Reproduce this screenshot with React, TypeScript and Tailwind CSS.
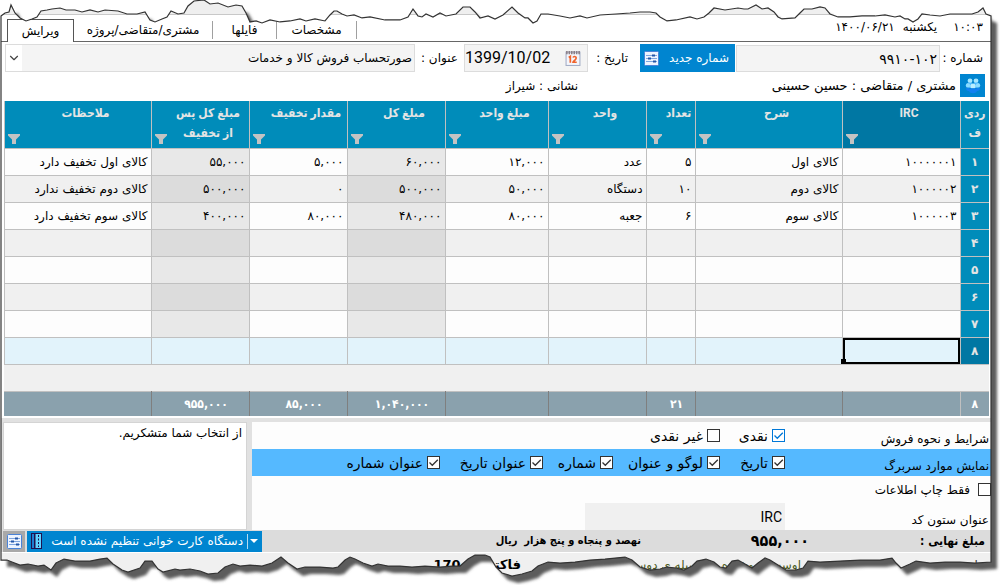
import { useState } from 'react'
import type { ReactNode } from 'react'
import { ChevronDown } from 'lucide-react'
import clsx from 'clsx'

const TABS = [
  { id: 'specs', label: 'مشخصات', width: 'w-20' },
  { id: 'files', label: 'فایلها', width: 'w-16' },
  { id: 'customer', label: 'مشتری/متقاضی/پروژه', width: 'w-[139px]' },
  { id: 'edit', label: 'ویرایش', width: 'w-[67px]' },
]

const COLUMNS = [
  { key: 'irc', label: 'IRC', width: 118, total: '' },
  { key: 'desc', label: 'شرح', width: 147, total: '' },
  { key: 'count', label: 'تعداد', width: 49, total: '۲۱' },
  { key: 'unit', label: 'واحد', width: 98, total: '' },
  { key: 'unitPrice', label: 'مبلغ واحد', width: 103, total: '' },
  { key: 'sum', label: 'مبلغ کل', width: 98, total: '۱,۰۴۰,۰۰۰' },
  { key: 'discount', label: 'مقدار تخفیف', width: 98, total: '۸۵,۰۰۰' },
  { key: 'net', label: 'مبلغ کل پس\nاز تخفیف', width: 98, total: '۹۵۵,۰۰۰' },
  { key: 'notes', label: 'ملاحظات', width: 147, total: '' },
]

const ROWS: Record<string, string>[] = [
  { irc: '۱۰۰۰۰۰۰۱', desc: 'کالای اول', count: '۵', unit: 'عدد', unitPrice: '۱۲,۰۰۰', sum: '۶۰,۰۰۰', discount: '۵,۰۰۰', net: '۵۵,۰۰۰', notes: 'کالای اول تخفیف دارد' },
  { irc: '۱۰۰۰۰۰۲', desc: 'کالای دوم', count: '۱۰', unit: 'دستگاه', unitPrice: '۵۰,۰۰۰', sum: '۵۰۰,۰۰۰', discount: '۰', net: '۵۰۰,۰۰۰', notes: 'کالای دوم تخفیف ندارد' },
  { irc: '۱۰۰۰۰۰۳', desc: 'کالای سوم', count: '۶', unit: 'جعبه', unitPrice: '۸۰,۰۰۰', sum: '۴۸۰,۰۰۰', discount: '۸۰,۰۰۰', net: '۴۰۰,۰۰۰', notes: 'کالای سوم تخفیف دارد' },
  {}, {}, {}, {}, {},
]

const ROW_NUMBERS = ['۱', '۲', '۳', '۴', '۵', '۶', '۷', '۸']

const SHEET =
  'M1 16L5 13L9 12L11 5L15 13L20 18L26 21L32 19L37 17L41 11L47 10L52 9L60 8L66 10L75 10L82 12L90 10L98 12L105 10L118 11L127 14L137 14L145 12L150 20L155 22L162 19L167 17L171 11L178 14L184 13L188 6L194 1L204 0L210 4L218 3L228 7L236 5L242 6L246 13L250 22L256 21L262 23L270 20L280 22L290 21L300 19L306 21L315 19L325 21L330 15L334 11L337 11L342 14L347 16L354 15L362 18L370 17L385 20L400 20L408 17L413 9L418 16L422 17L426 14L433 17L440 13L446 16L456 14L463 7L470 7L475 12L480 18L488 16L495 19L503 15L512 7L518 13L525 18L528 18L533 23L537 21L541 14L548 14L560 16L570 18L580 16L587 18L600 15L616 14L630 13L640 12L650 12L656 13L660 17L667 21L676 20L690 17L697 19L704 17L709 13L714 8L725 10L738 8L744 9L748 9L756 5L762 9L768 8L774 12L778 17L782 19L795 18L800 13L804 9L812 9L820 7L825 8L830 14L838 17L850 17L862 16L875 16L885 15L895 17L900 16L905 19L908 19L913 22L918 19L922 14L930 15L940 16L950 14L965 14L972 14L978 12L983 8L986 14L991 16' +
  'V563L975 564L960 563L945 563L930 564L916 562L910 565L901 569L896 564L892 559L880 561L860 561L840 562L820 563L808 562L803 569L796 571L786 571L778 566L770 561L765 559L758 564L752 569L745 565L738 561L732 562L726 569L720 568L714 563L706 560L697 562L692 567L684 571L676 569L667 568L660 570L650 571L640 568L632 561L625 558L605 560L590 561L575 563L560 564L548 563L538 567L532 572L522 575L512 577L502 574L496 568L490 558L485 556L475 556L468 560L460 567L452 567L440 568L425 567L412 568L400 567L388 567L378 565L372 567L363 564L355 560L350 558L345 561L338 568L333 569L320 568L305 568L297 570L288 564L281 558L272 564L262 567L250 566L240 567L233 565L225 568L218 574L208 575L200 572L190 570L180 571L175 570L163 573L158 570L152 562L145 562L140 569L128 573L122 571L113 565L107 559L100 560L90 562L75 562L64 560L56 564L51 571L44 566L38 567L28 565L20 566L12 563L7 561L1 561Z'

// Ragged paper outline with its drop shadow, laid over the whole window
function TornEdge() {
  return (
    <svg className="pointer-events-none absolute inset-0 h-full w-full" viewBox="0 0 1000 586" preserveAspectRatio="none" aria-hidden="true">
      <defs>
        <clipPath id="outside">
          <path d={'M0 0H1000V586H0Z' + SHEET} clipRule="evenodd" />
        </clipPath>
        <filter id="soft" x="-2%" y="-2%" width="104%" height="104%">
          <feGaussianBlur stdDeviation="1.6" />
        </filter>
      </defs>
      <path d={'M0 0H1000V586H0Z' + SHEET} fillRule="evenodd" fill="#fff" />
      <g clipPath="url(#outside)">
        <path d={SHEET} transform="translate(6 7)" fill="#5c5c5c" filter="url(#soft)" />
      </g>
      <path d={SHEET} fill="none" stroke="#333" strokeWidth="1.2" />
    </svg>
  )
}

function FilterIcon() {
  return (
    <svg className="absolute bottom-[3px] left-[3px] h-3 w-3" viewBox="0 0 12 12" aria-hidden="true">
      <path d="M0 1H12V2.5L8 6.5V11H4V6.5L0 2.5Z" fill="#c3c3c3" />
    </svg>
  )
}

function SettingsIcon() {
  return (
    <svg className="h-[15px] w-[15px] shrink-0" viewBox="0 0 15 15" aria-hidden="true">
      <rect x=".5" y=".5" width="14" height="14" rx="1" fill="#eef4ff" stroke="#4a83d8" />
      <path d="M2 4.5H13M2 7.5H13M2 10.5H13" stroke="#7fa6df" />
      <path d="M8 3.5h3v2H8zM4 6.5h3v2H4zM9 9.5h3v2h-3z" fill="#2456a8" />
    </svg>
  )
}

function CalendarIcon() {
  return (
    <svg className="h-4 w-4" viewBox="0 0 15 15" aria-hidden="true">
      <rect x="1" y="2" width="13" height="12.5" fill="#f4f6fc" stroke="#a4adc6" />
      <path d="M1 2.5H14" stroke="#8b7f87" strokeWidth="3" strokeDasharray="1.5 .8" />
      <path d="M3.5 7L5 6V12M7.5 7C8 5.7 10.5 5.7 10.5 7.5S7.5 10.5 7.5 11.5H11" fill="none" stroke="#f0642d" strokeWidth="1.6" />
    </svg>
  )
}

function PeopleIcon() {
  return (
    <svg className="h-4 w-4" viewBox="0 0 16 16" aria-hidden="true">
      <circle cx="5" cy="2.8" r="2.4" fill="#a4e6ff" />
      <circle cx="11" cy="2.8" r="2.4" fill="#a4e6ff" />
      <path d="M1 8c0-5 7-4 7-1 0-3 7-4 7 1l-4 2H5z" fill="#4ab8ff" />
      <circle cx="3" cy="7.5" r="2.2" fill="#8bdcff" />
      <circle cx="13" cy="7.5" r="2.2" fill="#8bdcff" />
      <circle cx="8" cy="8" r="2.6" fill="#b9eeff" />
      <path d="M1 11c1-2 3-1 4 0 1-1 5-1 6 0 1-1 3-2 4 0-1 2-2 2-3 2-1 3-7 3-8 0-1 0-2 0-3-2z" fill="#1280f0" />
    </svg>
  )
}

interface CheckProps {
  label: ReactNode
  checked?: boolean
  focused?: boolean
  small?: boolean
}

function Check({ label, checked = false, focused, small }: CheckProps) {
  const [on, setOn] = useState(checked)
  return (
    <label className={clsx('flex items-center whitespace-nowrap', small ? 'gap-2 text-xs' : 'gap-1 text-sm')}>
      <span className="relative flex h-[13px] w-[13px] shrink-0">
        <input
          type="checkbox"
          checked={on}
          onChange={(e) => setOn(e.target.checked)}
          className={clsx('h-full w-full appearance-none border bg-white', focused ? 'border-[#0078d7]' : 'border-[#333]')}
        />
        {on && (
          <svg className="pointer-events-none absolute inset-0" viewBox="0 0 13 13" aria-hidden="true">
            <path d="M2.5 6.5L5.3 9.3L10.8 3.8" fill="none" stroke={focused ? '#0078d7' : '#333'} strokeWidth="1.3" />
          </svg>
        )}
      </span>
      {label}
    </label>
  )
}

function InvoiceGrid() {
  return (
    <table className="w-full table-fixed border-collapse text-xs">
      <colgroup>
        <col style={{ width: 29 }} />
        {COLUMNS.map((c) => (
          <col key={c.key} style={{ width: c.width }} />
        ))}
      </colgroup>
      <thead className="font-[Roboto,'DejaVu_Sans_Condensed','DejaVu_Sans',sans-serif]">
        <tr className="h-[47px] bg-[#008cba] text-[#e4e4e4]">
          <th className="border-l border-[#c0c0c0] pt-0.5 align-top leading-5">ردی<br />ف</th>
          {COLUMNS.map((c) => (
            <th
              key={c.key}
              className={clsx('relative border-x border-[#c0c0c0] pt-0.5 pl-4 align-top leading-5 whitespace-pre', c.key === 'irc' && 'bg-[#0077a3]')}
            >
              {c.label}
              <FilterIcon />
            </th>
          ))}
        </tr>
      </thead>
      <tbody>
        {ROWS.map((row, i) => (
          <tr key={i} className={clsx('h-[27px]', i === 7 ? 'bg-[#e2f3fb]' : i % 2 ? 'bg-[#f0f0f0]' : 'bg-[#fdfdfd]')}>
            <th className={clsx('border border-r-0 border-[#c0c0c0] text-[#e4e4e4]', i === 7 ? 'bg-[#0077a3]' : 'bg-[#008cba]')}>
              {ROW_NUMBERS[i]}
            </th>
            {COLUMNS.map((c) => (
              <td
                key={c.key}
                className={clsx(
                  'relative whitespace-nowrap border border-[#c0c0c0] px-[3px] text-right',
                  (c.key === 'sum' || c.key === 'net') && i < 7 && (i % 2 ? 'bg-[#dcdcdc]' : 'bg-[#e8e8e8]'),
                )}
              >
                {row[c.key]}
                {c.key === 'irc' && i === 7 && (
                  <span className="absolute inset-0 border-2 border-black">
                    <span className="absolute -bottom-0.5 -left-1 h-[5px] w-[5px] bg-black" />
                  </span>
                )}
              </td>
            ))}
          </tr>
        ))}
        <tr className="h-[27px] bg-[#f0f0f0]">
          <td colSpan={10} />
        </tr>
      </tbody>
      <tfoot className="font-['DejaVu_Sans_Condensed','DejaVu_Sans',sans-serif]">
        <tr className="h-[25px] border-t border-[#c0c0c0] bg-[#8aa1ad] text-white">
          <th className="border-l border-[#c0c0c0]">۸</th>
          {COLUMNS.map((c) => (
            <th key={c.key} className="border-l border-[#7f7f7f] pl-3 last:border-l-0">{c.total}</th>
          ))}
        </tr>
      </tfoot>
    </table>
  )
}

export default function App() {
  const [tab, setTab] = useState('edit')

  return (
    <div dir="rtl" className="relative overflow-hidden bg-white font-['DejaVu_Sans',sans-serif] text-xs text-black">
      <div className="mr-[9px] ml-px bg-white">
        <div className="h-[15px] border-b border-[#c8c8c8] bg-[#efefef]" />

        <header className="flex h-[27px] items-end border-b border-[#666] pr-2">
          <time className="pb-1 leading-5">۱۰:۰۳</time>
          <span className="mr-4 pb-1 leading-5">یکشنبه</span>
          <time className="mr-2 pb-1 leading-5">۱۴۰۰/۰۶/۲۱</time>
          <nav className="mr-auto ml-1.5 flex items-end">
            {TABS.map((t) => (
              <button
                key={t.id}
                type="button"
                onClick={() => setTab(t.id)}
                className={clsx(
                  'whitespace-nowrap',
                  t.width,
                  tab === t.id ? '-mb-px h-[23px] border border-b-0 border-[#555] bg-white' : 'mb-0.5 h-[18px] border-r border-[#a0a0a0]',
                )}
              >
                {t.label}
              </button>
            ))}
          </nav>
        </header>

        <div className="flex h-[30px] items-end pr-2 pl-1">
          <label htmlFor="number" className="w-[43px] whitespace-nowrap leading-7">شماره :</label>
          <input id="number" defaultValue="۹۹۱۰-۱۰۲" className="h-[27px] w-[204px] border border-[#dcdcdc] bg-[#f4f4f4] px-0.5 text-right text-sm" />
          <button type="button" className="mr-px flex h-7 w-[95px] items-center justify-between bg-[#0085d0] pr-1.5 pl-1 text-white">
            شماره جدید
            <SettingsIcon />
          </button>
          <label htmlFor="date" className="mr-3 w-10 whitespace-nowrap leading-7">تاریخ :</label>
          <div className="flex h-7 w-[124px] items-center gap-2 border border-[#dcdcdc] bg-[#f4f4f4] pr-1.5">
            <CalendarIcon />
            <input id="date" dir="ltr" defaultValue="1399/10/02" className="w-[92px] bg-transparent font-[Roboto,sans-serif] text-base" />
          </div>
          <label htmlFor="title" className="mr-1.5 w-[43px] whitespace-nowrap leading-7">عنوان :</label>
          <div className="relative h-7 flex-1 border border-[#dcdcdc] bg-[#f4f4f4]">
            <select id="title" className="h-full w-full appearance-none bg-transparent px-0.5 text-right">
              <option>صورتحساب فروش کالا و خدمات</option>
            </select>
            <span className="pointer-events-none absolute inset-y-0 left-0 flex w-4 items-center justify-center bg-white">
              <ChevronDown size={14} color="#444" />
            </span>
          </div>
        </div>

        <div className="flex h-[29px] items-start gap-1 pt-0.5 pr-1.5 leading-6">
          <button type="button" aria-label="مشتری" className="flex h-[23px] w-[25px] items-center justify-center bg-[#0085d0]">
            <PeopleIcon />
          </button>
          <span className="w-[374px] text-[13px] whitespace-pre">مشتری / متقاضی : حسین حسینی</span>
          <span>نشانی : شیراز</span>
        </div>

        <div className="mr-0.5 ml-[3px]">
          <InvoiceGrid />
        </div>

        <div className="mt-0.5 flex border-t-4 border-[#e1e1e1]">
          <div className="min-w-0 flex-1 bg-[#fdfdfd]">
            <div className="flex h-[27px] items-center">
              <span className="w-[206px] pt-1.5 pr-0.5">شرایط و نحوه فروش</span>
              <div className="w-[65px]"><Check label="نقدی" checked focused /></div>
              <Check label="غیر نقدی" />
            </div>
            <div className="flex h-[27px] items-center bg-[#55b9ff]">
              <span className="w-[206px] pt-1.5 pr-0.5">نمایش موارد سربرگ</span>
              <div className="w-[65px]"><Check label="تاریخ" checked /></div>
              <div className="w-[107px]"><Check label="لوگو و عنوان" checked /></div>
              <div className="w-[70px]"><Check label="شماره" checked /></div>
              <div className="w-[103px]"><Check label="عنوان تاریخ" checked /></div>
              <Check label="عنوان شماره" checked />
            </div>
            <div className="flex h-[27px] items-center">
              <Check label="فقط چاپ اطلاعات" small />
            </div>
            <div className="flex h-[27px] items-center">
              <label htmlFor="code" className="w-[206px] pt-1.5 pr-0.5">عنوان ستون کد</label>
              <input id="code" defaultValue="IRC" className="h-full w-[200px] bg-[#f0f0f0] px-[3px] text-right font-[Roboto,sans-serif] text-sm" />
            </div>
          </div>
          <div className="flex w-[251px] bg-[#e1e1e1] pr-[5px] pl-0.5">
            <textarea
              aria-label="توضیحات"
              defaultValue="از انتخاب شما متشکریم."
              className="block w-full resize-none border border-[#d4d4d4] bg-white px-1 py-0.5 leading-4"
            />
          </div>
        </div>

        <div className="flex h-[23px] items-center border-b border-white bg-[#dcdcdc] pr-1.5 pl-0.5 font-['DejaVu_Sans_Condensed','DejaVu_Sans',sans-serif] font-bold">
          <span className="w-[176px]">مبلغ نهایی :</span>
          <span className="w-[168px] text-base leading-5">۹۵۵,۰۰۰</span>
          <span className="text-[11px] whitespace-pre">نهصد و پنجاه و پنج هزار  ریال</span>
          <button type="button" className="mr-auto flex h-[21px] w-[235px] items-center bg-[#0085d0] px-1 font-['DejaVu_Sans',sans-serif] font-normal whitespace-nowrap text-white">
            <svg className="h-2 w-2" viewBox="0 0 8 8" aria-hidden="true"><path d="M0 2H8L4 6Z" fill="#fff" /></svg>
            <span className="mr-0.5 h-[15px] border-r border-white/70" />
            <span className="mr-1 flex-1 text-right">دستگاه کارت خوانی تنظیم نشده است</span>
            <svg className="h-4 w-[11px]" viewBox="0 0 11 16" aria-hidden="true">
              <rect width="11" height="16" fill="#20124f" />
              <rect x="1" y="1" width="2" height="14" fill="#1d7fd0" />
              <rect x="4.5" y="1" width="5.5" height="14" fill="#5fd2ff" />
              <path d="M7.5 2V14" stroke="#20124f" strokeDasharray="2 1.5" />
            </svg>
          </button>
          <button type="button" aria-label="تنظیمات" className="mr-0.5 flex h-[21px] w-[22px] items-center justify-center bg-[#a9a9a9]">
            <SettingsIcon />
          </button>
        </div>

        <footer className="flex h-8 items-start bg-[#f0f0f0] pr-1.5 leading-6 whitespace-nowrap">
          <span className="w-[184px] text-[#333]">پیام روز :</span>
          <span className="w-[280px] text-[#4a5a20]">اوست فروشنده به وسیله ی دوست</span>
          <span className="text-[13px] font-bold">فاکتور 170.0</span>
        </footer>
      </div>
      <TornEdge />
    </div>
  )
}
